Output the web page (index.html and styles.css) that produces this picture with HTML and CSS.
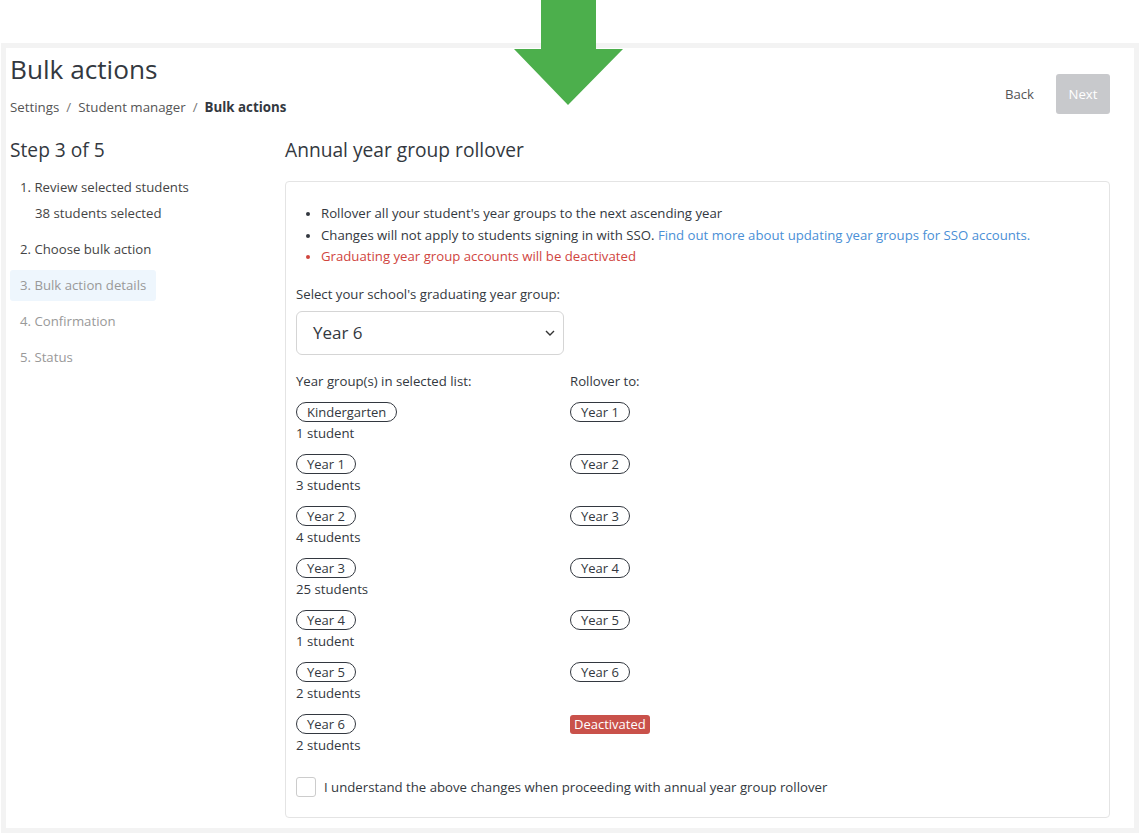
FILE: index.html
```html
<!DOCTYPE html>
<html>
<head>
<meta charset="utf-8">
<title>Bulk actions</title>
<link rel="stylesheet" href="styles.css">
</head>
<body>
<svg class="arrow" width="110" height="106" viewBox="0 0 110 106" aria-hidden="true">
  <polygon points="27,0 82,0 82,49 109,49 54,105 0,49 27,49" fill="#4caf4c"/>
</svg>
<div class="frame">
  <header class="page-head">
    <div>
      <h1 class="title">Bulk actions</h1>
      <nav class="crumbs">
        <span>Settings</span><span class="sep">/</span><span>Student manager</span><span class="sep">/</span><strong>Bulk actions</strong>
      </nav>
    </div>
    <div class="actions">
      <button class="btn-link">Back</button>
      <button class="btn-next" disabled>Next</button>
    </div>
  </header>
  <div class="layout">
    <aside class="sidebar">
      <h2 class="step">Step 3 of 5</h2>
      <ul class="steps">
        <li class="item"><div>1. Review selected students</div><div class="sub">38 students selected</div></li>
        <li class="item">2. Choose bulk action</li>
        <li class="item active">3. Bulk action details</li>
        <li class="item muted">4. Confirmation</li>
        <li class="item muted">5. Status</li>
      </ul>
    </aside>
    <main class="main">
      <h2 class="heading">Annual year group rollover</h2>
      <section class="card">
        <ul class="notes">
          <li>Rollover all your student's year groups to the next ascending year</li>
          <li>Changes will not apply to students signing in with SSO. <a class="link" href="#">Find out more about updating year groups for SSO accounts.</a></li>
          <li class="warn">Graduating year group accounts will be deactivated</li>
        </ul>
        <label class="field-label">Select your school's graduating year group:</label>
        <div class="select">
          <span>Year 6</span>
          <svg width="10" height="6" viewBox="0 0 10 6"><path d="M1 1 L5 5 L9 1" fill="none" stroke="#333" stroke-width="1.4"/></svg>
        </div>
        <div class="grid">
          <div class="col-head">Year group(s) in selected list:</div>
          <div class="col-head">Rollover to:</div>

          <div class="cell"><span class="pill">Kindergarten</span><div class="count">1 student</div></div>
          <div class="cell"><span class="pill">Year 1</span></div>

          <div class="cell"><span class="pill">Year 1</span><div class="count">3 students</div></div>
          <div class="cell"><span class="pill">Year 2</span></div>

          <div class="cell"><span class="pill">Year 2</span><div class="count">4 students</div></div>
          <div class="cell"><span class="pill">Year 3</span></div>

          <div class="cell"><span class="pill">Year 3</span><div class="count">25 students</div></div>
          <div class="cell"><span class="pill">Year 4</span></div>

          <div class="cell"><span class="pill">Year 4</span><div class="count">1 student</div></div>
          <div class="cell"><span class="pill">Year 5</span></div>

          <div class="cell"><span class="pill">Year 5</span><div class="count">2 students</div></div>
          <div class="cell"><span class="pill">Year 6</span></div>

          <div class="cell"><span class="pill">Year 6</span><div class="count">2 students</div></div>
          <div class="cell"><span class="badge">Deactivated</span></div>
        </div>
        <label class="confirm"><span class="box"></span>I understand the above changes when proceeding with annual year group rollover</label>
      </section>
    </main>
  </div>
</div>
</body>
</html>
```
FILE: styles.css
```css
* { box-sizing: border-box; }
html, body { margin: 0; padding: 0; background: #fff; }
body {
  font-family: "Open Sans", "Noto Sans", sans-serif;
  font-size: 13.2px;
  color: #333840;
  position: relative;
  width: 1147px;
  height: 839px;
  overflow: hidden;
}
.arrow { position: absolute; left: 514px; top: 0; z-index: 2; }
.frame {
  margin: 43px 0 0 1px;
  width: 1138px;
  height: 790px;
  border: 5px solid #f3f3f3;
  padding: 0 24px 0 4px;
}
.page-head { display: flex; justify-content: space-between; align-items: flex-start; }
.title { margin: 0; padding-top: 3px; font-size: 26.2px; font-weight: 400; line-height: 36px; color: #333840; }
.crumbs { margin-top: 10px; font-size: 13.3px; color: #555; line-height: 20px; }
.crumbs .sep { margin: 0 7px; color: #777; }
.crumbs strong { color: #333840; font-weight: 700; }
.actions { display: flex; align-items: center; gap: 14px; margin-top: 26px; }
.btn-link { font: inherit; font-size: 13.2px; color: #555; background: none; border: 0; padding: 0 8px; height: 40px; }
.btn-next { font: inherit; font-size: 13.2px; color: #fff; background: #c8c9cc; border: 0; border-radius: 3px; width: 54px; height: 40px; }
.layout { display: flex; margin-top: 19px; }
.sidebar { width: 275px; flex: none; }
.step, .heading { margin: 0; font-size: 19.2px; font-weight: 400; line-height: 28px; color: #333840; }
.steps { list-style: none; margin: 8px 0 0; padding: 0; display: flex; flex-direction: column; align-items: flex-start; gap: 5px; }
.item { padding: 5px 10px; line-height: 21px; border-radius: 3px; color: #444; }
.item .sub { margin-top: 5px; padding-left: 15px; }
.item.active { background: #eef6fd; color: #999; }
.item.muted { color: #999; }
.main { flex: 1; }
.card { margin-top: 17px; border: 1px solid #e4e4e4; border-radius: 4px; padding: 21px 10px 20px 10px; height: 637px; }
.notes { margin: 0 0 16px; padding-left: 25px; line-height: 21.5px; }
.notes li::marker { font-size: 11px; }
.link { color: #4a8fd6; text-decoration: none; }
.warn { color: #d0453e; }
.field-label { display: block; line-height: 20px; }
.select {
  margin-top: 7px; width: 268px; height: 44px; border: 1px solid #d5d5d5; border-radius: 6px;
  display: flex; align-items: center; justify-content: space-between; padding: 0 8px 0 16px;
  font-size: 17px; color: #333840;
}
.grid { display: grid; grid-template-columns: 274px 1fr; row-gap: 10px; margin-top: 16px; }
.col-head { line-height: 20px; margin-bottom: 1px; }
.cell { min-height: 42px; }
.pill { display: inline-block; height: 20px; line-height: 18px; padding: 0 10px; border: 1px solid #333840; border-radius: 10px; font-size: 13px; }
.count { line-height: 21px; margin-top: 1px; }
.badge { display: inline-block; height: 19px; line-height: 19px; margin-top: 1px; padding: 0 4px; background: #c9514a; color: #fff; border-radius: 3px; font-size: 13px; }
.confirm { display: flex; align-items: center; gap: 8px; margin-top: 21px; }
.box { width: 20px; height: 20px; border: 1px solid #ccc; border-radius: 3px; flex: none; }
```
